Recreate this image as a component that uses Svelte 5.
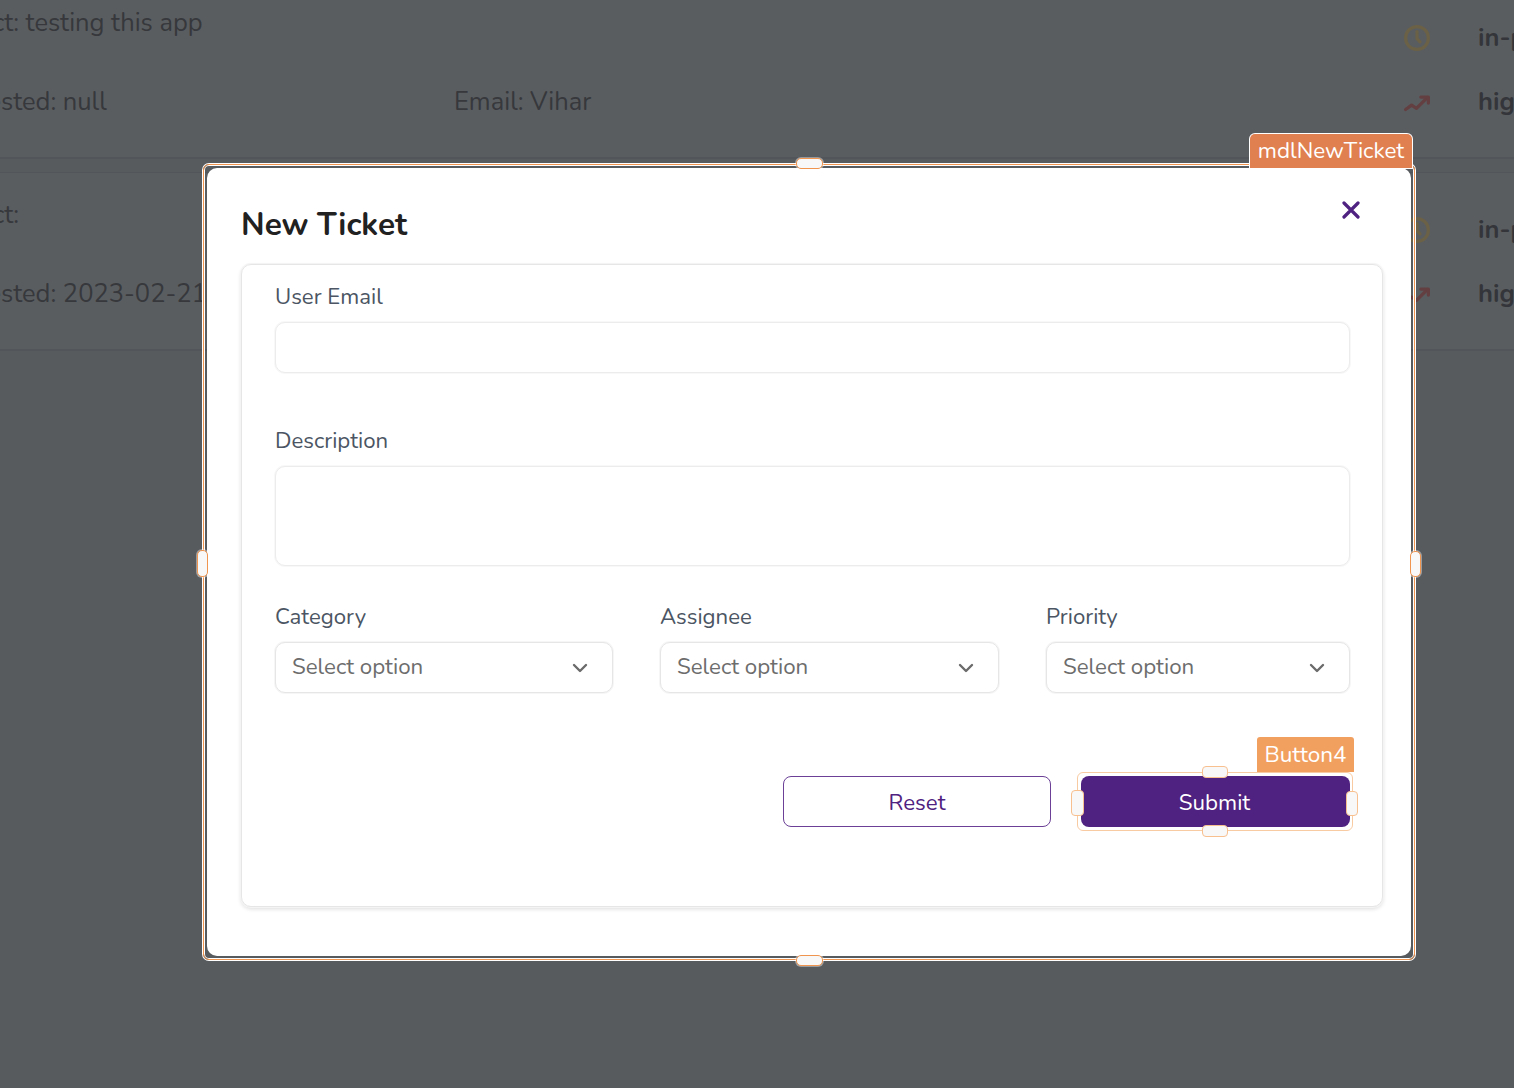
<script lang="ts">
  const tickets = [
    { subject: 'Subject: testing this app', requested: 'Requested: null', email: 'Email: Vihar' },
    { subject: 'Subject:', requested: 'Requested: 2023-02-21', email: '' }
  ];
  const dropdowns = ['Category', 'Assignee', 'Priority'];
</script>

<div class="page">
  <div class="list">
    {#each tickets as t}
      <div class="ticket">
        <div class="subject">{t.subject}</div>
        <div class="blank"></div>
        <svg class="ico clock" viewBox="0 0 24 24" fill="none" stroke="#6a6147" stroke-width="3" stroke-linecap="round" stroke-linejoin="round">
          <circle cx="12" cy="12" r="10.5"></circle>
          <path d="M12 6v6.5l2.8 3"></path>
        </svg>
        <div class="state">in-progress</div>
        <div class="requested">{t.requested}</div>
        <div class="email">{t.email}</div>
        <svg class="ico trend" viewBox="0 0 24 24" fill="none" stroke="#633f42" stroke-width="3" stroke-linecap="round" stroke-linejoin="round">
          <path d="M1.5 18 7 14l4.5 3 9.5-9.5"></path>
          <path d="M15.5 6.5h7V12"></path>
        </svg>
        <div class="state">high</div>
      </div>
    {/each}
  </div>

  <div class="modal">
    <div class="modal-head">
      <h2>New Ticket</h2>
      <button class="close" aria-label="Close">
        <svg viewBox="0 0 18 18" fill="none" stroke="#4f2180" stroke-width="3.2" stroke-linecap="round">
          <path d="M2 2l14 14M16 2 2 16"></path>
        </svg>
      </button>
    </div>

    <div class="form">
      <label class="field email-field">
        <span>User Email</span>
        <input type="text" />
      </label>
      <label class="field desc-field">
        <span>Description</span>
        <textarea></textarea>
      </label>

      <div class="selects">
        {#each dropdowns as d}
          <div class="field">
            <span>{d}</span>
            <div class="select">
              Select option
              <svg viewBox="0 0 16 10" fill="none" stroke="#6b6b6b" stroke-width="2.4" stroke-linecap="round" stroke-linejoin="round">
                <path d="M2 2l6 6 6-6"></path>
              </svg>
            </div>
          </div>
        {/each}
      </div>

      <div class="actions">
        <button class="btn reset">Reset</button>
        <div class="submit-wrap">
          <button class="btn submit">Submit</button>
          <div class="btn-frame">
            <div class="tag btn-tag">Button4</div>
            <i class="bh top"></i>
            <i class="bh bottom"></i>
            <i class="bh left"></i>
            <i class="bh right"></i>
          </div>
        </div>
      </div>
    </div>

    <div class="frame">
      <div class="tag modal-tag">mdlNewTicket</div>
      <i class="mh top"></i>
      <i class="mh bottom"></i>
      <i class="mh left"></i>
      <i class="mh right"></i>
    </div>
  </div>
</div>

<style>
  :global(body) { background: #585b5e; }
  .page {
    position: relative; height: 1088px; overflow: hidden; background: #585b5e;
    font-family: "Nunito", "Open Sans", "Noto Sans", sans-serif; color: #37393d;
  }

  .list { display: flex; flex-direction: column; gap: 13px; margin-top: -20px; margin-left: -72px; width: 1700px; }
  .ticket {
    display: grid; grid-template-columns: 526px 950px 26px 1fr; grid-auto-rows: 64px; align-items: center;
    height: 179px; box-sizing: border-box; padding-top: 24px; align-content: start;
    background: #5a5d60; border-top: 1px solid #525559; border-bottom: 2px solid #525559; font-size: 25.5px;
  }
  .subject { align-self: start; color: #36383c; }
  .requested { color: #36383c; }
  .email { color: #36383c; }
  .ico { width: 26px; height: 26px; }
  .clock { margin-top: 2px; }
  .trend { margin-top: 4px; }
  .state { font-weight: 700; color: #33353a; padding-left: 48px; white-space: nowrap; }

  .modal {
    position: absolute; left: 207px; top: 168px; width: 1204px; height: 788px; box-sizing: border-box;
    background: #fff; border-radius: 10px; padding: 0 28px 0 34px;
  }
  .modal-head { display: flex; justify-content: space-between; height: 96px; }
  h2 { margin: 36px 0 0; font-size: 31.6px; line-height: 41px; font-weight: 700; color: #212121; }
  .close { width: 18px; height: 18px; padding: 0; margin: 33px 23px 0 0; border: 0; background: none; }
  .close svg { display: block; width: 18px; height: 18px; }

  .form {
    height: 643px; box-sizing: border-box; padding: 17px 32px 0 33px;
    border: 1px solid #e6e6e6; border-radius: 10px; box-shadow: 0 0 0 1px #f4f4f4, 0 2px 4px rgba(0, 0, 0, 0.14);
  }
  .field { display: flex; flex-direction: column; gap: 9px; }
  .field span { font-size: 22.2px; line-height: 31px; color: #4b5563; }
  input, textarea {
    display: block; width: 100%; box-sizing: border-box; border: 1px solid #ececec; border-radius: 10px;
    background: #fff; outline: 0; resize: none; margin: 0; padding: 0; box-shadow: 0 0 0 1px #f8f8f8;
  }
  input { height: 51px; }
  textarea { height: 100px; }
  .email-field { margin-bottom: 53px; }
  .desc-field { margin-bottom: 36px; }

  .selects { display: grid; grid-template-columns: 338px 339px 304px; column-gap: 47px; }
  .select {
    display: flex; align-items: center; justify-content: space-between; height: 51px; box-sizing: border-box;
    padding: 0 24px 2px 16px; border: 1px solid #e6e6e6; border-radius: 10px; box-shadow: 0 0 0 1px #f6f6f6;
    font-size: 22.3px; color: #6d6d6d; background: #fff;
  }
  .select svg { width: 16px; height: 10px; margin-top: 2px; }

  .actions { display: flex; justify-content: flex-end; gap: 30px; margin-top: 83px; }
  .btn {
    width: 269px; height: 51px; box-sizing: border-box; border-radius: 8px; font: inherit; font-size: 22.3px; padding: 2px 0 0;
  }
  .reset { width: 268px; background: #fff; border: 1px solid #6b4096; color: #4f2180; }
  .submit { background: #4f2180; border: 0; color: #fff; display: block; padding-right: 2px; }
  .submit-wrap { position: relative; }

  .frame {
    position: absolute; inset: -4px; border: 1px solid #f0954f; border-radius: 6px;
    box-shadow: 0 0 0 1px #fff, inset 0 0 0 1px #fff; pointer-events: none;
  }
  .tag { position: absolute; color: #fff; font-size: 22.4px; white-space: nowrap; }
  .modal-tag {
    right: 2px; top: -31px; height: 34px; line-height: 34px; width: 162px; text-align: center;
    background: #e07f50; border-radius: 5px 5px 0 0; box-shadow: 0 0 0 1px #fff;
  }
  .mh { position: absolute; box-sizing: border-box; background: #f8f8f8; border: 1px solid #f0954f; border-radius: 5px; box-shadow: 0 0 0 1px rgba(255, 255, 255, 0.4); }
  .mh.top { left: 592px; top: -7px; width: 27px; height: 11px; }
  .mh.bottom { left: 592px; bottom: -7px; width: 27px; height: 11px; }
  .mh.left { left: -7px; top: 385px; width: 11px; height: 27px; }
  .mh.right { right: -7px; top: 386px; width: 11px; height: 26px; }

  .btn-frame {
    position: absolute; left: -4px; top: -4px; width: 276px; height: 59px; box-sizing: border-box;
    border: 1px solid #f9cba3; border-radius: 6px;
  }
  .btn-tag {
    right: -2px; top: -36px; width: 97px; height: 35px; line-height: 35px; text-align: center;
    background: #f2a05f; border-radius: 3px 3px 0 0; font-size: 22.5px;
  }
  .bh { position: absolute; box-sizing: border-box; background: #f8f8f8; border: 1px solid #f8c08f; border-radius: 4px; }
  .bh.top { left: 124px; top: -7px; width: 26px; height: 12px; }
  .bh.bottom { left: 124px; bottom: -7px; width: 26px; height: 12px; }
  .bh.left { left: -7px; top: 17px; width: 13px; height: 26px; }
  .bh.right { right: -6px; top: 18px; width: 12px; height: 25px; }
</style>
